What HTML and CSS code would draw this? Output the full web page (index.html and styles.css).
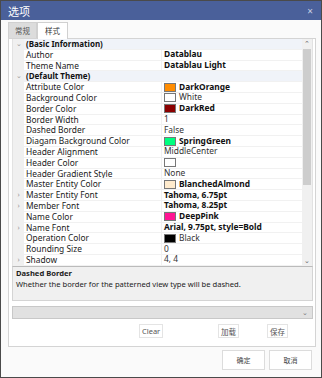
FILE: index.html
```html
<html><head>
	<meta charset="UTF-8">
	<link rel="stylesheet" href="styles.css">
</head>
<body>
<div class="window">
	<div class="titlebar">
		<span class="title">选项</span>
		<span class="close">×</span>
	</div>
	<div class="content">
		<div class="tabs">
			<div class="tab">常规</div>
			<div class="tab active">样式</div>
		</div>
		<div class="panel">
			<div class="grid">
				<div class="rows">
					<div class="row cat"><span class="gut">⌄</span><span class="name b">(Basic Information)</span><span class="val"></span></div>
					<div class="row"><span class="gut"></span><span class="name">Author</span><span class="val b">Datablau</span></div>
					<div class="row"><span class="gut"></span><span class="name">Theme Name</span><span class="val b">Datablau Light</span></div>
					<div class="row cat"><span class="gut">⌄</span><span class="name b">(Default Theme)</span><span class="val"></span></div>
					<div class="row"><span class="gut"></span><span class="name">Attribute Color</span><span class="val b"><i class="sw" style="background:#ff8c00"></i>DarkOrange</span></div>
					<div class="row"><span class="gut"></span><span class="name">Background Color</span><span class="val"><i class="sw" style="background:#fff"></i>White</span></div>
					<div class="row"><span class="gut"></span><span class="name">Border Color</span><span class="val b"><i class="sw" style="background:#8b0000"></i>DarkRed</span></div>
					<div class="row"><span class="gut"></span><span class="name">Border Width</span><span class="val">1</span></div>
					<div class="row"><span class="gut"></span><span class="name">Dashed Border</span><span class="val">False</span></div>
					<div class="row"><span class="gut"></span><span class="name">Diagam Background Color</span><span class="val b"><i class="sw" style="background:#00ff7f"></i>SpringGreen</span></div>
					<div class="row"><span class="gut"></span><span class="name">Header Alignment</span><span class="val">MiddleCenter</span></div>
					<div class="row"><span class="gut"></span><span class="name">Header Color</span><span class="val"><i class="sw" style="background:#fff"></i></span></div>
					<div class="row"><span class="gut"></span><span class="name">Header Gradient Style</span><span class="val">None</span></div>
					<div class="row"><span class="gut"></span><span class="name">Master Entity Color</span><span class="val b"><i class="sw" style="background:#ffebcd"></i>BlanchedAlmond</span></div>
					<div class="row"><span class="gut">›</span><span class="name">Master Entity Font</span><span class="val b">Tahoma, 6.75pt</span></div>
					<div class="row"><span class="gut">›</span><span class="name">Member Font</span><span class="val b">Tahoma, 8.25pt</span></div>
					<div class="row"><span class="gut"></span><span class="name">Name Color</span><span class="val b"><i class="sw" style="background:#ff1493"></i>DeepPink</span></div>
					<div class="row"><span class="gut">›</span><span class="name">Name Font</span><span class="val b">Arial, 9.75pt, style=Bold</span></div>
					<div class="row"><span class="gut"></span><span class="name">Operation Color</span><span class="val"><i class="sw" style="background:#000"></i>Black</span></div>
					<div class="row"><span class="gut"></span><span class="name">Rounding Size</span><span class="val">0</span></div>
					<div class="row"><span class="gut">›</span><span class="name">Shadow</span><span class="val">4, 4</span></div>
				</div>
				<div class="scrollbar">
					<span class="arrow">⌃</span>
					<div class="track"><div class="thumb"></div></div>
					<span class="arrow">⌄</span>
				</div>
			</div>
			<div class="desc">
				<div class="desc-title">Dashed Border</div>
				<div class="desc-text">Whether the border for the patterned view type will be dashed.</div>
			</div>
			<div class="select"><span class="chev">⌄</span></div>
			<div class="actions">
				<button class="small clear">Clear</button>
				<button class="small load">加载</button>
				<button class="small save">保存</button>
			</div>
		</div>
		<div class="footer">
			<button class="big">确定</button>
			<button class="big">取消</button>
		</div>
	</div>
</div>
</body></html>
```

FILE: styles.css
```css
* {
	box-sizing: border-box;
	font-family: "Noto Sans", "Noto Sans CJK SC", sans-serif;
}
body {
	margin: 0;
	background: #fff;
}
.window {
	width: 322px;
	height: 378px;
	border: 1px solid #4a4a4a;
	display: flex;
	flex-direction: column;
	background: #fafafa;
}
.titlebar {
	height: 19px;
	background: #4a609a;
	color: #fff;
	display: flex;
	align-items: center;
	justify-content: space-between;
	padding: 0 8px 0 7px;
	flex-shrink: 0;
}
.title {
	font-size: 11px;
}
.close {
	font-size: 10px;
	color: #c8d0e4;
}
.content {
	flex: 1;
	padding: 1px 5px 0 7px;
	display: flex;
	flex-direction: column;
}
.tabs {
	display: flex;
	height: 17px;
	align-items: flex-end;
}
.tab {
	font-size: 7.5px;
	color: #555;
	background: #dcdcdc;
	height: 16px;
	line-height: 16px;
	padding: 0 6px;
	border: 1px solid #d0d0d0;
	border-bottom: none;
}
.tab.active {
	background: #fff;
	color: #333;
	height: 17px;
	margin-bottom: -1px;
	position: relative;
	padding: 0 7px;
}
.panel {
	background: #fff;
	border: 1px solid #d4d4d4;
	height: 309px;
	padding: 0 2px 0 3px;
	display: flex;
	flex-direction: column;
}
.grid {
	display: flex;
	height: 227px;
	border-left: 1px solid #e2e2e2;
	border-right: 1px solid #e2e2e2;
}
.rows {
	flex: 1;
	font-size: 8.4px;
	color: #222;
}
.row {
	display: flex;
	height: 10.8px;
	line-height: 10.8px;
}
.gut {
	width: 11px;
	background: #f0f0f0;
	color: #999;
	font-size: 7px;
	text-align: center;
	flex-shrink: 0;
}
.name {
	width: 138px;
	padding-left: 2px;
	border-bottom: 1px solid #f1f1f1;
	border-right: 1px solid #f1f1f1;
	white-space: nowrap;
	overflow: hidden;
	flex-shrink: 0;
}
.val {
	flex: 1;
	padding-left: 2px;
	border-bottom: 1px solid #f1f1f1;
	display: flex;
	align-items: center;
	white-space: nowrap;
	overflow: hidden;
	color: #333;
}
.b {
	font-weight: bold;
	color: #111;
}
.cat .name {
	font-size: 8px;
}
.cat .name, .cat .val {
	background: #f0f3f9;
	border-right: none;
}
.sw {
	width: 12px;
	height: 9px;
	border: 1px solid #777;
	margin-right: 3px;
	flex-shrink: 0;
}
.scrollbar {
	width: 10px;
	background: #f0f0f0;
	display: flex;
	flex-direction: column;
	align-items: center;
}
.arrow {
	height: 10px;
	font-size: 7px;
	line-height: 10px;
	color: #666;
}
.track {
	flex: 1;
	width: 100%;
	padding: 0 1px;
}
.thumb {
	height: 136px;
	background: #cdcdcd;
}
.desc {
	height: 35px;
	background: #f0f0f0;
	border: 1px solid #d4d4d4;
	border-top: 1px solid #bbb;
	padding: 1px 3px;
	font-size: 7.6px;
	color: #222;
}
.desc-title {
	font-weight: bold;
	line-height: 11px;
}
.desc-text {
	line-height: 11px;
}
.select {
	margin-top: 5px;
	height: 13px;
	background: #e1e1e1;
	border: 1px solid #c8c8c8;
	display: flex;
	justify-content: flex-end;
	align-items: center;
	padding-right: 4px;
}
.chev {
	font-size: 7px;
	color: #777;
}
.actions {
	position: relative;
	height: 27px;
}
.small {
	position: absolute;
	top: 5px;
	height: 14px;
	padding: 0 2px;
	font-size: 7.5px;
	background: #fff;
	border: 1px solid #e4e4e4;
	color: #555;
}
.clear { left: 127px; }
.load { left: 206px; }
.save { left: 255px; }
.footer {
	display: flex;
	justify-content: flex-end;
	gap: 4px;
	padding: 3px 4px 0 0;
}
.big {
	width: 43px;
	height: 20px;
	font-size: 7px;
	background: #fff;
	border: 1px solid #dcdcdc;
	color: #444;
}
```
